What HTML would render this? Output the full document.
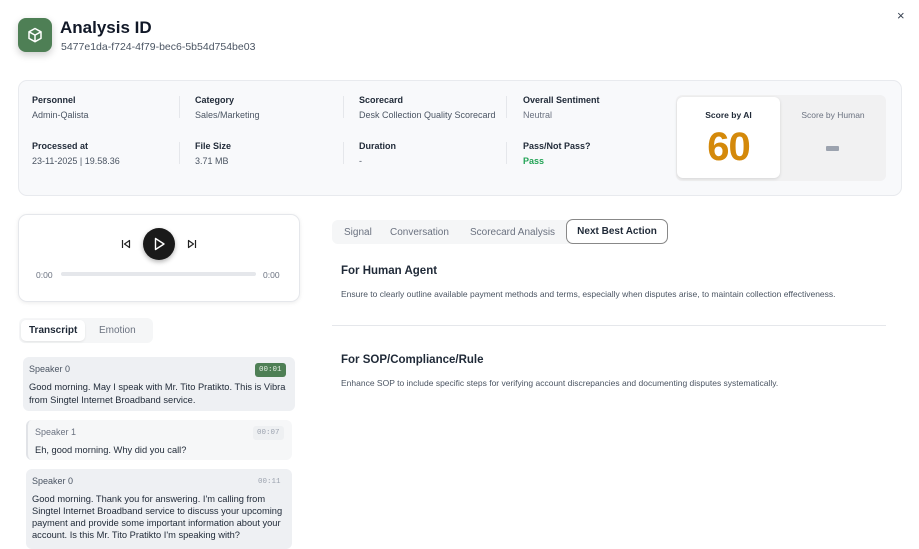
<!DOCTYPE html>
<html><head><style>
*{margin:0;padding:0;box-sizing:border-box}
body{width:919px;height:538px;overflow:hidden;background:#fff;font-family:"Liberation Sans",sans-serif;color:#111827;position:relative}
.a{position:absolute;white-space:nowrap}
.lb{font-size:9px;font-weight:bold;color:#1f2937}
.vl{font-size:9px;color:#4b5563}
.dv{position:absolute;width:1px;background:#e5e7eb;height:22px}
.bub{position:absolute;border-radius:6px;font-size:9.3px;color:#1f2937;line-height:13px}
.sp{font-size:9px;color:#4b5563}
.ts{position:absolute;font-family:"Liberation Mono",monospace;font-size:7.5px;color:#6b7280;border-radius:3px;padding:3px 4px}
</style></head><body>
<div class="a" style="left:18px;top:18px;width:34px;height:34px;border-radius:8px;background:#4e7f55;box-shadow:0 3px 8px rgba(0,0,0,.2)">
<svg width="34" height="34" viewBox="0 0 34 34"><g fill="none" stroke="#fff" stroke-width="1.5" stroke-linejoin="round"><path d="M17 10.5l6 3.3v6.6L17 23.7l-6-3.3v-6.6z"/><path d="M11 13.8l6 3.3 6-3.3M17 17.1v6.6"/></g></svg></div>
<div class="a" style="left:60px;top:18px;font-size:17px;font-weight:bold">Analysis ID</div>
<div class="a" style="left:61px;top:41px;font-size:10.5px;color:#4b5563">5477e1da-f724-4f79-bec6-5b54d754be03</div>
<div class="a" style="left:897px;top:8px;font-size:13px;color:#374151">×</div>

<div class="a" style="left:18px;top:80px;width:884px;height:116px;background:#f8f9fb;border:1px solid #e8eaee;border-radius:9px"></div>
<div class="a lb" style="left:32px;top:95px">Personnel</div><div class="a vl" style="left:32px;top:110px">Admin-Qalista</div>
<div class="a lb" style="left:195px;top:95px">Category</div><div class="a vl" style="left:195px;top:110px">Sales/Marketing</div>
<div class="a lb" style="left:359px;top:95px">Scorecard</div><div class="a vl" style="left:359px;top:110px">Desk Collection Quality Scorecard</div>
<div class="a lb" style="left:523px;top:95px">Overall Sentiment</div><div class="a vl" style="left:523px;top:110px;color:#6b7280">Neutral</div>
<div class="a lb" style="left:32px;top:141px">Processed at</div><div class="a vl" style="left:32px;top:156px">23-11-2025 | 19.58.36</div>
<div class="a lb" style="left:195px;top:141px">File Size</div><div class="a vl" style="left:195px;top:156px">3.71 MB</div>
<div class="a lb" style="left:359px;top:141px">Duration</div><div class="a vl" style="left:359px;top:156px">-</div>
<div class="a lb" style="left:523px;top:141px">Pass/Not Pass?</div><div class="a vl" style="left:523px;top:156px;color:#22a355;font-weight:bold">Pass</div>
<div class="dv" style="left:179px;top:96px"></div><div class="dv" style="left:343px;top:96px"></div><div class="dv" style="left:506px;top:96px"></div>
<div class="dv" style="left:179px;top:142px"></div><div class="dv" style="left:343px;top:142px"></div><div class="dv" style="left:506px;top:142px"></div>

<div class="a" style="left:676px;top:95px;width:210px;height:86px;background:#f1f1f2;border-radius:6px"></div>
<div class="a" style="left:677px;top:97px;width:103px;height:81px;background:#fff;border-radius:6px;box-shadow:0 1px 3px rgba(0,0,0,.12)"></div>
<div class="a" style="left:677px;top:110px;width:103px;text-align:center;font-size:8.5px;font-weight:bold;color:#1f2937">Score by AI</div>
<div class="a" style="left:677px;top:125px;width:103px;text-align:center;font-size:40px;font-weight:bold;color:#d4890a;letter-spacing:-1px">60</div>
<div class="a" style="left:780px;top:110px;width:106px;text-align:center;font-size:8.5px;color:#6b7280">Score by Human</div>
<div class="a" style="left:826px;top:146px;width:13px;height:5px;background:#9ca3af;border-radius:1px"></div>

<div class="a" style="left:18px;top:214px;width:282px;height:88px;border:1px solid #e5e7eb;border-radius:9px;box-shadow:0 1px 4px rgba(0,0,0,.08)"></div>
<svg class="a" style="left:120px;top:238px" width="12" height="12" viewBox="0 0 12 12"><path d="M2.5 2v8M9.5 2.5L4.5 6l5 3.5z" fill="none" stroke="#222" stroke-width="1.2" stroke-linejoin="round"/></svg>
<div class="a" style="left:143px;top:228px;width:32px;height:32px;border-radius:50%;background:#1a1a1a;box-shadow:0 2px 5px rgba(0,0,0,.3)"></div>
<svg class="a" style="left:143px;top:228px" width="32" height="32" viewBox="0 0 32 32"><path d="M12.5 10.5L21 16l-8.5 5.5z" fill="none" stroke="#fff" stroke-width="1.4" stroke-linejoin="round"/></svg>
<svg class="a" style="left:186px;top:238px" width="12" height="12" viewBox="0 0 12 12"><path d="M9.5 2v8M2.5 2.5L7.5 6l-5 3.5z" fill="none" stroke="#222" stroke-width="1.2" stroke-linejoin="round"/></svg>
<div class="a" style="left:36px;top:270px;font-size:8.5px;color:#6b7280">0:00</div>
<div class="a" style="left:61px;top:272px;width:195px;height:4px;border-radius:2px;background:#e5e7eb"></div>
<div class="a" style="left:263px;top:270px;font-size:8.5px;color:#6b7280">0:00</div>

<div class="a" style="left:19px;top:318px;width:134px;height:25px;background:#f5f6f7;border-radius:6px"></div>
<div class="a" style="left:21px;top:320px;width:64px;height:21px;background:#fff;border-radius:5px;box-shadow:0 1px 2px rgba(0,0,0,.08)"></div>
<div class="a" style="left:29px;top:325px;font-size:10px;font-weight:bold;color:#1f2937">Transcript</div>
<div class="a" style="left:99px;top:325px;font-size:10px;color:#6b7280">Emotion</div>

<div class="bub" style="left:23px;top:357px;width:272px;height:54px;background:#eef0f3;padding:6px 6px">
<div class="sp">Speaker 0</div><div style="margin-top:5px">Good morning. May I speak with Mr. Tito Pratikto. This is Vibra from Singtel Internet Broadband service.</div></div>
<div class="ts" style="left:255px;top:363px;background:#4e7f55;color:#e5efe5">00:01</div>
<div class="bub" style="left:26px;top:420px;width:266px;height:40px;background:#f6f7f8;border-left:2px solid #e1e3e7;padding:6px 7px">
<div class="sp" style="color:#6b7280">Speaker 1</div><div style="margin-top:5px">Eh, good morning. Why did you call?</div></div>
<div class="ts" style="left:253px;top:426px;background:#eef0f2;color:#9ca3af">00:07</div>
<div class="bub" style="left:26px;top:469px;width:266px;height:80px;background:#eef0f3;padding:6px 6px">
<div class="sp">Speaker 0</div><div style="margin-top:5px;line-height:12px">Good morning. Thank you for answering. I'm calling from Singtel Internet Broadband service to discuss your upcoming payment and provide some important information about your account. Is this Mr. Tito Pratikto I'm speaking with?</div></div>
<div class="ts" style="left:254px;top:475px;color:#9ca3af">00:11</div>

<div class="a" style="left:332px;top:220px;width:336px;height:24px;background:#f5f6f7;border-radius:6px"></div>
<div class="a" style="left:344px;top:227px;font-size:10px;color:#6b7280">Signal</div>
<div class="a" style="left:390px;top:227px;font-size:10px;color:#6b7280">Conversation</div>
<div class="a" style="left:470px;top:227px;font-size:10px;color:#6b7280">Scorecard Analysis</div>
<div class="a" style="left:566px;top:219px;width:102px;height:25px;background:#fff;border:1px solid #888;border-radius:7px;text-align:center;line-height:24px;font-size:10px;font-weight:bold;color:#1f2937">Next Best Action</div>

<div class="a" style="left:341px;top:265px;font-size:11.5px;font-weight:bold;color:#1f2937">For Human Agent</div>
<div class="a" style="left:341px;top:289px;font-size:8.5px;color:#4b5563">Ensure to clearly outline available payment methods and terms, especially when disputes arise, to maintain collection effectiveness.</div>
<div class="a" style="left:332px;top:325px;width:554px;height:1px;background:#e5e7eb"></div>
<div class="a" style="left:341px;top:354px;font-size:11.5px;font-weight:bold;color:#1f2937">For SOP/Compliance/Rule</div>
<div class="a" style="left:341px;top:378px;font-size:8.5px;color:#4b5563">Enhance SOP to include specific steps for verifying account discrepancies and documenting disputes systematically.</div>
</body></html>
